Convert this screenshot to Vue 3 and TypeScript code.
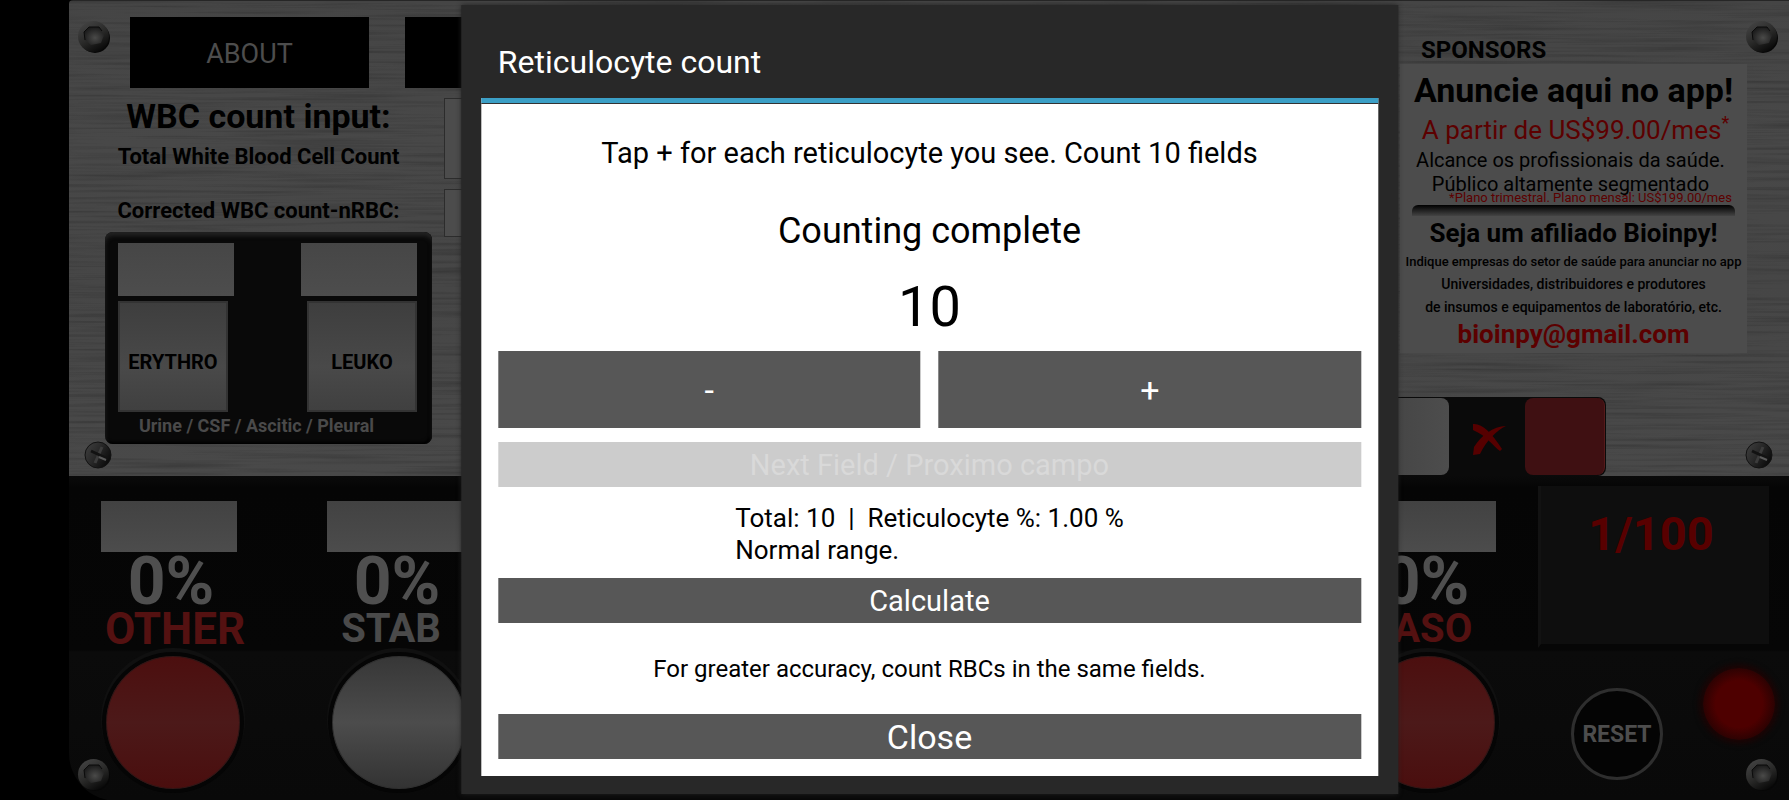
<script setup lang="ts">
import { computed, ref } from 'vue'

interface Channel {
  name: string
  tone: 'red' | 'grey'
  large?: boolean
}

const leftChannels: Channel[] = [
  { name: 'OTHER', tone: 'red', large: true },
  { name: 'STAB', tone: 'grey' },
]
const rightChannels: Channel[] = [{ name: 'BASO', tone: 'red' }]

const open = ref(true)
const complete = ref(true)
const count = ref(10)
const percent = computed(() => (count.value / 10).toFixed(2))

function step(delta: number) {
  count.value = Math.max(0, count.value + delta)
}
</script>

<template>
  <div class="screen">
    <div class="device">
      <section class="upper">
        <svg class="grain" aria-hidden="true">
          <filter id="brushed" x="0" y="0" width="100%" height="100%">
            <feTurbulence type="fractalNoise" baseFrequency="0.006 0.3" numOctaves="3" seed="4" />
            <feColorMatrix values="0 0 0 0 0  0 0 0 0 0  0 0 0 0 0  0.4 0 0 0 -0.17" />
          </filter>
          <rect width="100%" height="100%" filter="url(#brushed)" />
        </svg>

        <div class="upper-left">
          <nav class="menu">
            <button type="button" class="menu-button">ABOUT</button>
            <button type="button" class="menu-button" aria-label="Menu"></button>
          </nav>
          <div class="entry">
            <div class="entry-labels">
              <h2>WBC count input:</h2>
              <label for="wbc">Total White Blood Cell Count</label>
              <label for="corrected" class="second">Corrected WBC count-nRBC:</label>
              <div class="fluids">
                <div class="fluid-row">
                  <output class="fluid-display"></output>
                  <output class="fluid-display"></output>
                </div>
                <div class="fluid-row keys-row">
                  <button type="button" class="fluid-key">ERYTHRO</button>
                  <button type="button" class="fluid-key">LEUKO</button>
                </div>
                <p>Urine / CSF / Ascitic / Pleural</p>
              </div>
            </div>
            <div class="entry-fields">
              <input id="wbc" type="text" class="tall" />
              <input id="corrected" type="text" />
            </div>
          </div>
        </div>

        <div class="upper-right">
          <h3>SPONSORS</h3>
          <div class="ad">
            <p class="ad-title">Anuncie aqui no app!</p>
            <p class="ad-price">A partir de US$99.00/mes<sup>*</sup></p>
            <p class="ad-text">Alcance os profissionais da saúde.</p>
            <p class="ad-text">Público altamente segmentado</p>
            <p class="ad-note">*Plano trimestral. Plano mensal: US$199.00/mes</p>
            <div class="ad-bar"></div>
            <p class="ad-sub">Seja um afiliado Bioinpy!</p>
            <p class="ad-line small">Indique empresas do setor de saúde para anunciar no app</p>
            <p class="ad-line">Universidades, distribuidores e produtores</p>
            <p class="ad-line">de insumos e equipamentos de laboratório, etc.</p>
            <p class="ad-mail">bioinpy@gmail.com</p>
          </div>
          <div class="strip">
            <button type="button" class="strip-key white" aria-label="White key"></button>
            <svg class="cross" viewBox="0 0 34 34" aria-hidden="true">
              <path d="M0 2 C9 1 18 10 29 27 L27 29 C20 24 14 14 0 8 Z" />
              <path d="M33 4 C24 8 13 19 7 32 L0 33 L1 25 C8 14 20 4 33 4 Z" />
            </svg>
            <button type="button" class="strip-key red" aria-label="Red key"></button>
          </div>
        </div>
      </section>

      <section class="lower">
        <div class="channels">
          <div v-for="c in leftChannels" :key="c.name" class="channel">
            <output class="display"></output>
            <span class="percent">0%</span>
            <span class="name" :class="[c.tone, { large: c.large }]">{{ c.name }}</span>
            <button type="button" class="round" :class="c.tone" :aria-label="c.name"></button>
          </div>
        </div>
        <div class="right-group">
          <div class="channels">
            <div v-for="c in rightChannels" :key="c.name" class="channel centered">
              <output class="display"></output>
              <span class="percent">0%</span>
              <span class="name" :class="c.tone">{{ c.name }}</span>
              <button type="button" class="round" :class="c.tone" :aria-label="c.name"></button>
            </div>
          </div>
          <div class="status">
            <div class="counter">1/100</div>
            <div class="status-row">
              <button type="button" class="reset">RESET</button>
              <span class="lamp"></span>
            </div>
          </div>
        </div>
      </section>

      <svg
        v-for="p in ['hex-tl', 'hex-tr', 'hex-bl', 'hex-br']"
        :key="p"
        class="screw hex"
        :class="p"
        viewBox="0 0 34 34"
        aria-hidden="true"
      >
        <defs>
          <linearGradient :id="p + '-rim'" x1="0.2" y1="0" x2="0.8" y2="1">
            <stop offset="0" stop-color="#444" />
            <stop offset="0.5" stop-color="#2a2a29" />
            <stop offset="1" stop-color="#040404" />
          </linearGradient>
          <radialGradient :id="p + '-hole'" cx="0.55" cy="0.6" r="0.6">
            <stop offset="0" stop-color="#4a4a49" />
            <stop offset="1" stop-color="#1a1a1a" />
          </radialGradient>
        </defs>
        <circle cx="18" cy="18" r="15" fill="#070707" />
        <circle cx="16.5" cy="16.5" r="15.5" :fill="`url(#${p}-rim)`" />
        <path d="M12 7 H22 L27 15 L24 23 L14 25 L8 20 L7 12 Z" :fill="`url(#${p}-hole)`" />
        <path d="M8 20 L7 12 L12 7 H22 L25 11" fill="none" stroke="#0b0b0b" />
      </svg>
      <svg
        v-for="p in ['cross-l', 'cross-r']"
        :key="p"
        class="screw slot"
        :class="p"
        viewBox="0 0 28 28"
        aria-hidden="true"
      >
        <defs>
          <linearGradient :id="p + '-face'" x1="0" y1="0" x2="1" y2="0.6">
            <stop offset="0" stop-color="#414141" />
            <stop offset="0.5" stop-color="#2a2a2a" />
            <stop offset="1" stop-color="#0c0c0c" />
          </linearGradient>
        </defs>
        <circle cx="14" cy="14" r="13" :fill="`url(#${p}-face)`" stroke="#121212" />
        <path d="M18 6 L11 22" stroke="#3c3c3c" stroke-width="3" />
        <path d="M7 10 L22 17" stroke="#121212" stroke-width="3" />
        <path d="M15 16 L22 19" stroke="#5a5a5a" stroke-width="2" />
      </svg>
    </div>

    <div v-if="open" class="dialog" role="dialog" aria-labelledby="dialog-title">
      <h1 id="dialog-title">Reticulocyte count</h1>
      <div class="body">
        <p class="hint">Tap + for each reticulocyte you see. Count 10 fields</p>
        <p class="state">Counting complete</p>
        <p class="count">{{ count }}</p>
        <div class="pair">
          <button type="button" @click="step(-1)">-</button>
          <button type="button" @click="step(1)">+</button>
        </div>
        <button type="button" class="next" :disabled="complete">Next Field / Proximo campo</button>
        <p class="result">Total: {{ count }}&nbsp; |&nbsp; Reticulocyte %: {{ percent }} %<br />Normal range.</p>
        <button type="button">Calculate</button>
        <p class="note">For greater accuracy, count RBCs in the same fields.</p>
        <button type="button" class="close" @click="open = false">Close</button>
      </div>
    </div>
  </div>
</template>

<style>
body {
  margin: 0;
  background: #000;
}
</style>

<style scoped>
* {
  box-sizing: border-box;
}
h1,
h2,
h3,
p {
  margin: 0;
}
button,
input {
  font-family: inherit;
  border: 0;
  padding: 0;
  border-radius: 0;
}
.screen {
  position: relative;
  display: flex;
  min-height: 100vh;
  padding-left: 69px;
  overflow: hidden;
  background: #000;
  font-family: Roboto, 'Liberation Sans', sans-serif;
}
.device {
  position: relative;
  flex: 1;
  display: flex;
  flex-direction: column;
  border-radius: 4px 0 0 48px;
  overflow: hidden;
}

/* Upper, brushed metal half */
.upper {
  position: relative;
  display: flex;
  justify-content: space-between;
  background: linear-gradient(#454545, #484848 30%, #464646 60%, #494949);
  border-top: 1px solid #262626;
}
.grain {
  position: absolute;
  inset: 0;
  width: 100%;
  height: 100%;
}
.upper-left {
  position: relative;
  padding: 16px 0 32px 36px;
}
.menu {
  display: flex;
  gap: 36px;
  padding-left: 25px;
  margin-bottom: 10px;
}
.menu-button {
  width: 239px;
  height: 71px;
  background: #000;
  color: #4d4d4d;
  font-size: 27px;
  padding-top: 2px;
}
.entry {
  display: flex;
  gap: 12px;
}
.entry-labels {
  display: flex;
  flex-direction: column;
  width: 327px;
  color: #000;
}
h2 {
  margin-bottom: 9px;
  padding-right: 20px;
  font-size: 34px;
  line-height: 36px;
  text-align: center;
}
label {
  padding-right: 20px;
  font-size: 22px;
  font-weight: 700;
  line-height: 28px;
  text-align: center;
}
label.second {
  margin: 26px 0 7px;
}
.entry-fields {
  display: flex;
  flex-direction: column;
  gap: 10px;
}
.entry-fields input {
  width: 240px;
  height: 48px;
  background: #4c4c4c;
  border: 1px solid #2c2c2c;
}
.entry-fields input.tall {
  height: 81px;
}
.fluids {
  height: 212px;
  padding: 11px 15px 0 13px;
  border-radius: 8px;
  background: #090909;
  box-shadow: inset 0 4px 4px #222, inset -2px -2px 3px #000;
}
.fluid-row {
  display: flex;
  justify-content: space-between;
}
.keys-row {
  margin-top: 5px;
}
.fluid-display {
  width: 116px;
  height: 53px;
  background: linear-gradient(#464646, #4d4d4d);
}
.fluid-key {
  width: 110px;
  height: 111px;
  background: linear-gradient(#3e3e3e, #494949 60%, #404040);
  border: 2px solid #333;
  color: #000;
  font-size: 20px;
  font-weight: 700;
  padding-top: 10px;
}
.fluids p {
  padding: 1px 22px 0 0;
  color: #4a4a4a;
  font-size: 18px;
  font-weight: 700;
  line-height: 26px;
  text-align: center;
}
.upper-right {
  position: relative;
  display: flex;
  flex-direction: column;
  width: 389px;
  padding-top: 35px;
}
h3 {
  padding-left: 21px;
  font-size: 24px;
  line-height: 28px;
}
.ad {
  width: 347px;
  padding: 4px 0;
  background: #4c4c4c;
  color: #000;
  text-align: center;
  white-space: nowrap;
}
.ad-title {
  font-size: 34px;
  font-weight: 700;
  line-height: 44px;
}
.ad-price {
  padding-left: 4px;
  color: #5c0000;
  font-size: 26px;
  line-height: 36px;
}
.ad-price sup {
  font-size: 18px;
  line-height: 0;
}
.ad-text {
  font-size: 20px;
  line-height: 24px;
  padding-right: 6px;
}
.ad-note {
  margin-top: -4px;
  padding-left: 34px;
  color: #5c0000;
  font-size: 13px;
  line-height: 12px;
}
.ad-bar {
  height: 11px;
  margin: 1px 12px 0;
  border-radius: 6px 6px 0 0;
  background: linear-gradient(#000, #444);
}
.ad-sub {
  font-size: 26px;
  font-weight: 700;
  line-height: 34px;
}
.ad-line {
  font-size: 14px;
  font-weight: 500;
  line-height: 23px;
}
.ad-line.small {
  font-size: 13px;
}
.ad-mail {
  color: #5c0000;
  font-size: 26px;
  font-weight: 700;
  line-height: 30px;
}
.strip {
  align-self: flex-start;
  display: flex;
  align-items: center;
  width: 218px;
  height: 79px;
  margin: auto 0 0 -12px;
  padding: 1px;
  border-radius: 8px;
  background: #0a0a0a;
}
.strip-key {
  flex: none;
  width: 80px;
  height: 77px;
  border-radius: 8px;
}
.strip-key.white {
  flex: 1;
  width: auto;
  background: linear-gradient(90deg, #454545, #4d4d4d);
}
.strip-key.red {
  background: #3f1012;
  border-right: 1px solid #551a1a;
}
.cross {
  flex: none;
  width: 34px;
  height: 34px;
  margin: 4px 18px 0 24px;
  fill: #560000;
}

/* Lower, dark half */
.lower {
  flex: 1;
  display: flex;
  justify-content: space-between;
  padding: 25px 0 11px 32px;
  background: linear-gradient(#0a0a0a, #050505 12px, #060606 174px, #0b0b0b 176px, #090909);
  border-bottom: 1px solid #000;
}
.channels {
  display: flex;
  gap: 82px;
}
.channel {
  display: flex;
  flex-direction: column;
  align-items: center;
  width: 144px;
}
.display {
  align-self: flex-start;
  width: 136px;
  height: 51px;
  background: linear-gradient(#424242, #4c4c4c);
}
.centered .display {
  align-self: center;
}
.percent {
  padding-right: 4px;
  color: #4f4f4f;
  font-size: 66px;
  font-weight: 700;
  line-height: 60px;
}
.name {
  margin-bottom: 10px;
  padding-right: 16px;
  font-size: 40px;
  font-weight: 700;
  line-height: 34px;
}
.name.large {
  padding: 0 0 0 4px;
  font-size: 44px;
}
.name.red {
  color: #541111;
}
.name.grey {
  color: #4a4a4a;
}
.round {
  width: 134px;
  height: 133px;
  border-radius: 50%;
  box-shadow: 0 0 0 4px #050505, 0 -3px 0 5px #101010;
}
.round.red {
  background: linear-gradient(#4c0f0f, #4c1919 50%, #4a0e0e);
  border: 1px solid #331616;
}
.round.grey {
  background: linear-gradient(#373737, #4c4c4c 50%, #333);
  border: 1px solid #303030;
}
.right-group {
  display: flex;
  gap: 38px;
}
.status {
  width: 251px;
  margin-top: -15px;
}
.counter {
  height: 162px;
  margin-right: 20px;
  padding: 20px 8px 0 0;
  background: #0e0e0e;
  border-left: 3px solid #121212;
  border-bottom: 4px solid #060606;
  color: #580000;
  font-size: 47px;
  font-weight: 700;
  line-height: 56px;
  text-align: center;
}
.status-row {
  display: flex;
  align-items: flex-start;
  justify-content: space-between;
  padding: 20px 14px 0 33px;
}
.reset {
  width: 92px;
  height: 92px;
  margin-top: 20px;
  border: 3px solid #2e2e2e;
  border-radius: 50%;
  background: #040404;
  color: #4d4d4d;
  font-size: 23px;
  font-weight: 700;
}
.lamp {
  width: 72px;
  height: 72px;
  border-radius: 50%;
  background: radial-gradient(closest-side, #4e0000 65%, #2c0202);
  box-shadow: 0 0 6px 3px #1f0303;
}

/* Screws sit on top of the panel corners */
.screw {
  position: absolute;
}
.hex {
  width: 34px;
  height: 34px;
}
.slot {
  width: 28px;
  height: 28px;
  top: 441px;
}
.hex-tl {
  left: 8px;
  top: 20px;
}
.hex-tr {
  right: 10px;
  top: 20px;
}
.hex-bl {
  left: 8px;
  bottom: 9px;
}
.hex-br {
  right: 10px;
  bottom: 9px;
}
.cross-l {
  left: 15px;
}
.cross-r {
  right: 16px;
}

/* Dialog */
.dialog {
  position: absolute;
  top: 5px;
  left: calc(50% + 35px);
  width: calc((100% - 69px) * 0.545);
  transform: translateX(-50%);
  padding: 0 20px 18px;
  background: #282828;
  box-shadow: 0 0 5px #222;
  color: #000;
}
h1 {
  padding: 37px 17px 16px;
  color: #fff;
  font-size: 32px;
  font-weight: 400;
  line-height: 40px;
}
.body {
  display: flex;
  flex-direction: column;
  padding: 33px 17px 17px;
  border-top: 5px solid #3b9fc6;
  background: #fff;
  box-shadow: inset 0 1px #333;
  text-align: center;
}
.hint {
  margin-bottom: 40px;
  font-size: 29px;
  line-height: 34px;
}
.state {
  margin-bottom: 22px;
  font-size: 36px;
  line-height: 42px;
}
.count {
  margin-bottom: 11px;
  font-size: 56px;
  line-height: 66px;
}
.body button {
  height: 45px;
  padding-top: 1px;
  background: #575757;
  color: #fff;
  font-size: 29px;
  line-height: 44px;
}
.pair {
  display: grid;
  grid-template-columns: 1fr 1fr;
  gap: 18px;
  margin-bottom: 14px;
}
.body .pair button {
  height: 77px;
  font-size: 34px;
}
.body .next {
  background: #ccc;
  color: #d9d9d9;
}
.result {
  align-self: center;
  margin: 15px 0 12px;
  font-size: 26px;
  line-height: 32px;
  text-align: left;
}
.note {
  margin: 32px 0 31px;
  font-size: 24px;
  line-height: 28px;
}
.body .close {
  font-size: 34px;
}
</style>
